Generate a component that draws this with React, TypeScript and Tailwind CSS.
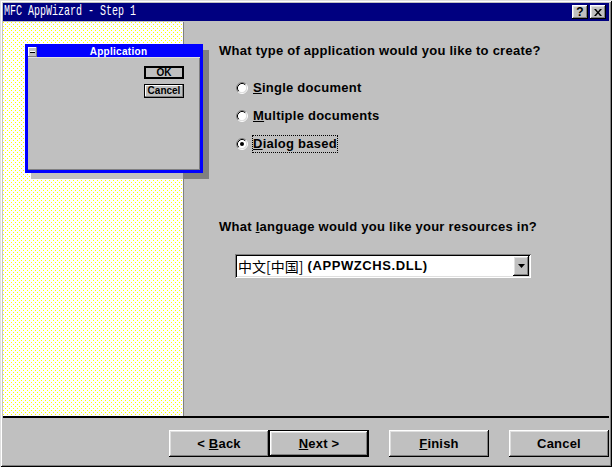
import type { ReactNode } from 'react'

const ui = "font-['Liberation_Sans','Noto_Sans_CJK_SC',Arial,sans-serif]"
const raised =
  'shadow-[inset_-1px_-1px_0_#000,inset_1px_1px_0_#fff,inset_-2px_-2px_0_#808080,inset_2px_2px_0_#dfdfdf]'
const sunken =
  'shadow-[inset_1px_1px_0_#808080,inset_-1px_-1px_0_#fff,inset_2px_2px_0_#000,inset_-2px_-2px_0_#dfdfdf]'

function Radio({ checked }: { checked?: boolean }) {
  return (
    <svg width="12" height="12" viewBox="0 0 12 12" className="shrink-0">
      <circle cx="6" cy="6" r="4.5" fill="#fff" />
      <path d="M2.11 9.89A5.5 5.5 0 0 1 9.89 2.11" fill="none" stroke="#808080" />
      <path d="M9.89 2.11A5.5 5.5 0 0 1 2.11 9.89" fill="none" stroke="#fff" />
      <path d="M2.82 9.18A4.5 4.5 0 0 1 9.18 2.82" fill="none" stroke="#000" />
      <path d="M9.18 2.82A4.5 4.5 0 0 1 2.82 9.18" fill="none" stroke="#dfdfdf" />
      {checked && <circle cx="6" cy="6" r="2" fill="#000" />}
    </svg>
  )
}

function Option({ children, checked }: { children: ReactNode; checked?: boolean }) {
  return (
    <div className="h-[28px] flex items-center gap-[4px]">
      <Radio checked={checked} />
      <span
        className={`h-[18px] leading-[16px] text-[13px] tracking-[0.25px] font-bold border ${
          checked ? 'border-dotted border-black' : 'border-transparent'
        }`}
      >
        {children}
      </span>
    </div>
  )
}

function WizButton({ children, isDefault, className = '' }: { children: ReactNode; isDefault?: boolean; className?: string }) {
  return (
    <div className={`w-[100px] h-[27px] ${isDefault ? 'border border-black' : ''} ${className}`}>
      <div className={`w-full h-full flex items-center justify-center text-[13px] tracking-[0.2px] font-bold text-black ${raised}`}>
        {children}
      </div>
    </div>
  )
}

function MiniDialog() {
  return (
    <>
      {/* drop shadow of the preview */}
      <div className="absolute left-[28px] top-[151px] w-[152px] h-[6px] bg-[#c0c0c0]" />
      <div className="absolute left-[181px] top-[151px] w-[25px] h-[6px] bg-[#808080]" />
      <div className="absolute left-[200px] top-[28px] w-[6px] h-[129px] bg-[#808080]" />

      <div className="absolute left-[22px] top-[22px] w-[178px] h-[129px] border-[3px] border-[#0000ff] bg-[#c0c0c0] flex flex-col">
        <div className="h-[10px] bg-[#0000ff] flex items-center">
          <div className="w-[9px] h-[10px] bg-[#c0c0c0] shadow-[inset_-1px_-1px_0_#808080,inset_1px_1px_0_#fff] flex items-center justify-center">
            <div className="w-[5px] h-[2px] bg-white border-b border-black" />
          </div>
          <div className="flex-1 text-center text-white font-bold text-[10px] leading-[10px] tracking-[0.3px]">Application</div>
        </div>
        <div className="h-px bg-[#dfdfdf]" />
        <div className="flex-1 flex flex-col items-end pt-[8px] pr-[15px] gap-[5px] border-r border-b border-[#808080]">
          <div className="w-[40px] h-[13px] border-2 border-black bg-[#c0c0c0] flex items-center justify-center text-[10px] leading-[10px] font-bold">
            OK
          </div>
          <div className="w-[40px] h-[14px] border border-black bg-[#c0c0c0] shadow-[inset_-1px_-1px_0_#808080,inset_1px_1px_0_#fff] flex items-center justify-center text-[10px] leading-[10px] font-bold">
            Cancel
          </div>
        </div>
      </div>
    </>
  )
}

export default function App() {
  return (
    <div
      className={`${ui} w-[612px] h-[467px] p-[3px] bg-[#c0c0c0] text-black flex flex-col shadow-[inset_1px_1px_0_#dfdfdf,inset_-1px_-1px_0_#000,inset_2px_2px_0_#fff,inset_-2px_-2px_0_#808080]`}
    >
      {/* title bar */}
      <div className="h-[18px] bg-[#000080] flex items-center pl-[1px] pr-[3px]">
        <span className="font-['Liberation_Mono',monospace] text-[15px] leading-[18px] text-white inline-block origin-left scale-x-[0.667] whitespace-nowrap">
          MFC AppWizard - Step 1
        </span>
        <div className="ml-auto flex gap-[2px]">
          <div className={`w-[16px] h-[14px] bg-[#c0c0c0] ${raised} flex items-center justify-center text-[12px] leading-[12px] font-bold`}>
            ?
          </div>
          <div className={`w-[16px] h-[14px] bg-[#c0c0c0] ${raised} flex items-center justify-center`}>
            <svg width="8" height="7" viewBox="0 0 8 7">
              <path d="M0 0h2l2 2.5L6 0h2L5 3.5 8 7H6L4 4.5 2 7H0l3-3.5z" fill="#000" />
            </svg>
          </div>
        </div>
      </div>

      <div className="mt-[1px] h-[394px] flex">
        {/* left picture panel */}
        <div className="relative w-[181px] h-full border-r border-[#808080] bg-white bg-[image:conic-gradient(from_0deg_at_1px_1px,transparent_270deg,#ffff00_0),conic-gradient(from_0deg_at_1px_1px,transparent_270deg,#ffff00_0)] bg-[length:4px_4px] bg-[position:0_0,2px_2px]">
          <MiniDialog />
        </div>

        {/* right options */}
        <div className="flex-1 flex flex-col">
          <p className="mt-[21px] ml-[35px] h-[16px] leading-[16px] text-[13px] tracking-[0.25px] font-bold whitespace-nowrap">
            What type of application would you like to create?
          </p>
          <div className="mt-[15px] ml-[52px] flex flex-col">
            <Option>
              <u>S</u>ingle document
            </Option>
            <Option>
              <u>M</u>ultiple documents
            </Option>
            <Option checked>
              <u>D</u>ialog based
            </Option>
          </div>
          <p className="mt-[61px] ml-[35px] h-[16px] leading-[16px] text-[13px] tracking-[0.25px] font-bold whitespace-nowrap">
            What <u>l</u>anguage would you like your resources in?
          </p>
          <div className={`mt-[19px] ml-[51px] w-[296px] h-[24px] bg-white p-[2px] flex ${sunken}`}>
            <div className="flex-1 flex items-center pl-[1px] whitespace-nowrap">
              <span className="text-[14px] leading-[18px] font-normal font-['Noto_Sans_CJK_SC',sans-serif]">中文[中国]</span>
              <span className="ml-[4px] text-[13px] leading-[18px] tracking-[0.6px] font-bold">(APPWZCHS.DLL)</span>
            </div>
            <div className={`w-[16px] h-full bg-[#c0c0c0] flex items-center justify-center ${raised}`}>
              <svg width="7" height="4" viewBox="0 0 7 4">
                <path d="M0 0h7L3.5 4z" fill="#000" />
              </svg>
            </div>
          </div>
        </div>
      </div>

      {/* separator */}
      <div className="h-[2px] bg-black" />

      {/* buttons */}
      <div className="h-[46px] flex justify-end items-start pt-[12px]">
        <WizButton>
          &lt;&nbsp;<u>B</u>ack
        </WizButton>
        <WizButton isDefault>
          <u>N</u>ext&nbsp;&gt;
        </WizButton>
        <WizButton className="ml-[20px]">
          <u>F</u>inish
        </WizButton>
        <WizButton className="ml-[20px]">Cancel</WizButton>
      </div>
    </div>
  )
}
